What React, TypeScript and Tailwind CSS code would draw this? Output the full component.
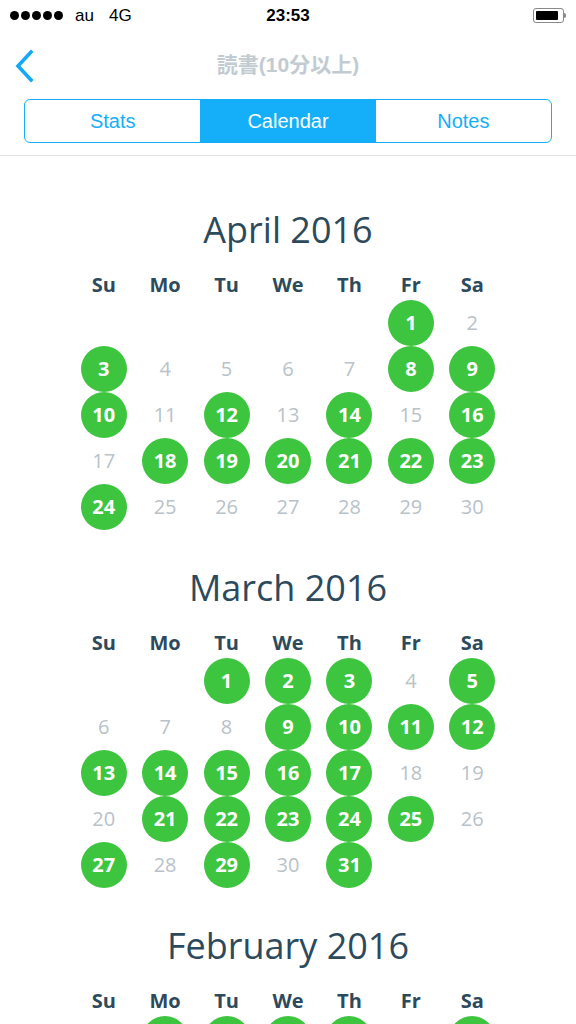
import React from "react";

type Month = {
  title: string;
  offset: number; // weekday of day 1, 0 = Sunday
  days: number;
  done: number[];
};

const months: Month[] = [
  {
    title: "April 2016",
    offset: 5,
    days: 30,
    done: [1, 3, 8, 9, 10, 12, 14, 16, 18, 19, 20, 21, 22, 23, 24],
  },
  {
    title: "March 2016",
    offset: 2,
    days: 31,
    done: [1, 2, 3, 5, 9, 10, 11, 12, 13, 14, 15, 16, 17, 21, 22, 23, 24, 25, 27, 29, 31],
  },
  {
    title: "February 2016",
    offset: 1,
    days: 29,
    done: [1, 2, 3, 4, 6],
  },
];

const weekdays = ["Su", "Mo", "Tu", "We", "Th", "Fr", "Sa"];

function StatusBar() {
  return (
    <div className="flex h-[31px] items-center justify-between px-[10px] font-['Liberation_Sans',sans-serif] text-[17px] text-black">
      <div className="flex items-center">
        <div className="flex gap-[2px]">
          {[0, 1, 2, 3, 4].map((i) => (
            <span key={i} className="h-[9px] w-[9px] rounded-full bg-black" />
          ))}
        </div>
        <span className="ml-[12px]">au</span>
        <span className="ml-[15px]">4G</span>
      </div>
      <span className="absolute left-1/2 -translate-x-1/2 font-semibold">23:53</span>
      <div className="flex items-center">
        <div className="flex h-[15px] w-[31px] items-center rounded-[3px] border border-[#8a8a8a] p-[2px]">
          <div className="h-full w-[22px] rounded-[1px] bg-black" />
        </div>
        <div className="h-[5px] w-[2px] rounded-r-sm bg-[#8a8a8a]" />
      </div>
    </div>
  );
}

function NavBar() {
  return (
    <div className="relative flex h-[68px] items-center justify-center">
      <svg
        className="absolute left-[13px] top-[18px]"
        width="22"
        height="34"
        viewBox="0 0 22 34"
        fill="none"
      >
        <path d="M18 3 L5 17 L18 31" stroke="#14a9f6" strokeWidth="3.6" strokeLinecap="square" />
      </svg>
      <span className="font-['Liberation_Sans','Noto_Sans_CJK_JP',sans-serif] text-[21px] font-bold text-[#c2cbd1]">
        読書(10分以上)
      </span>
    </div>
  );
}

function Segments() {
  const tabs = ["Stats", "Calendar", "Notes"];
  return (
    <div className="px-[24px] pb-[12px]">
      <div className="grid h-[44px] grid-cols-3 overflow-hidden rounded-[6px] border-[1.5px] border-[#14aff8] font-['Liberation_Sans',sans-serif] text-[20px]">
        {tabs.map((t, i) => (
          <div
            key={t}
            className={
              i === 1
                ? "flex items-center justify-center bg-[#14aff8] text-white"
                : "flex items-center justify-center text-[#14aff8]"
            }
          >
            {t}
          </div>
        ))}
      </div>
    </div>
  );
}

function MonthBlock({ month }: { month: Month }) {
  const cells: (number | null)[] = [];
  for (let i = 0; i < month.offset; i++) cells.push(null);
  for (let d = 1; d <= month.days; d++) cells.push(d);

  return (
    <section className="pb-[38px]">
      <h2 className="text-center text-[36px] leading-[40px] text-[#2d4a5c]">{month.title}</h2>
      <div className="mx-auto mt-[22px] grid w-[430px] grid-cols-7">
        {weekdays.map((w) => (
          <div key={w} className="text-center text-[20px] font-bold leading-[26px] text-[#2d4a5c]">
            {w}
          </div>
        ))}
      </div>
      <div className="mx-auto mt-[2px] grid w-[430px] grid-cols-7">
        {cells.map((d, i) => (
          <div key={i} className="flex h-[46px] items-center justify-center">
            {d !== null &&
              (month.done.includes(d) ? (
                <div className="flex h-[46px] w-[46px] items-center justify-center rounded-full bg-[#3ec53f] text-[20px] font-bold text-white">
                  {d}
                </div>
              ) : (
                <span className="text-[20px] text-[#b8c2c9]">{d}</span>
              ))}
          </div>
        ))}
      </div>
    </section>
  );
}

export default function App() {
  return (
    <div className="relative mx-auto h-[1024px] w-[576px] overflow-hidden bg-white">
      <StatusBar />
      <NavBar />
      <Segments />
      <div className="h-px bg-[#e3e3e3]" />
      <main className="pt-[54px] font-['Open_Sans',sans-serif]">
        {months.map((m) => (
          <MonthBlock key={m.title} month={m} />
        ))}
      </main>
    </div>
  );
}
